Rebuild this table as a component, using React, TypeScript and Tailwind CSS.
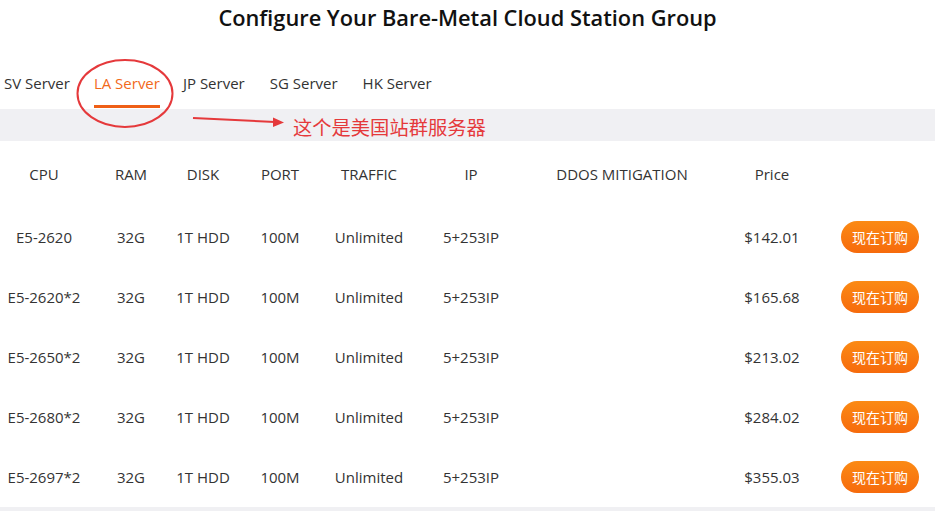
import React from "react";

const tabs = ["SV Server", "LA Server", "JP Server", "SG Server", "HK Server"];
const tabGap = ["mr-[24px]", "mr-[23px]", "mr-[25px]", "mr-[25px]", ""];

const rows = [
  { cpu: "E5-2620", price: "$142.01" },
  { cpu: "E5-2620*2", price: "$165.68" },
  { cpu: "E5-2650*2", price: "$213.02" },
  { cpu: "E5-2680*2", price: "$284.02" },
  { cpu: "E5-2697*2", price: "$355.03" },
];

const cols =
  "grid grid-cols-[88px_86px_58px_96px_82px_122px_180px_120px_96px] items-center text-center";

export default function App() {
  return (
    <div
      className="relative w-[935px] h-[511px] overflow-hidden bg-white text-[#333]"
      style={{ fontFamily: '"Open Sans", "Noto Sans CJK SC", sans-serif' }}
    >
      <h1 className="pt-[3px] text-center text-[21.8px] leading-[30px] font-semibold text-[#111]">
        Configure Your Bare-Metal Cloud Station Group
      </h1>

      {/* tabs */}
      <div className="mt-[38px] flex pl-[4px] text-[15px] leading-[24px]">
        {tabs.map((t, i) => (
          <div key={t} className={`flex flex-col items-center ${tabGap[i]}`}>
            <span className={i === 1 ? "text-[#f26a1b]" : "text-[#333]"}>{t}</span>
            <span
              className={`mt-[10px] h-[3px] w-full ${i === 1 ? "bg-[#ef5f16]" : "bg-transparent"}`}
            />
          </div>
        ))}
      </div>

      <div className="mt-px h-[32px] bg-[#f0f0f3]" />

      {/* table */}
      <div className="text-[15px]">
        <div className={`${cols} h-[66px]`}>
          <div>CPU</div>
          <div>RAM</div>
          <div>DISK</div>
          <div>PORT</div>
          <div>TRAFFIC</div>
          <div>IP</div>
          <div>DDOS MITIGATION</div>
          <div>Price</div>
          <div />
        </div>
        {rows.map((r) => (
          <div key={r.cpu} className={`${cols} h-[60px]`}>
            <div>{r.cpu}</div>
            <div>32G</div>
            <div>1T HDD</div>
            <div>100M</div>
            <div>Unlimited</div>
            <div>5+253IP</div>
            <div />
            <div>{r.price}</div>
            <div className="flex justify-center">
              <button className="h-[32px] w-[78px] rounded-full bg-gradient-to-b from-[#fb8a14] to-[#f66a0c] text-[14px] text-white">
                现在订购
              </button>
            </div>
          </div>
        ))}
      </div>
      <div className="h-[4px] bg-[#f0f0f3]" />

      {/* red annotations */}
      <svg
        className="pointer-events-none absolute left-0 top-0"
        width="935"
        height="511"
        viewBox="0 0 935 511"
      >
        <ellipse cx="125" cy="93.5" rx="47.5" ry="33.5" fill="none" stroke="#e5393b" strokeWidth="2" />
        <line x1="193" y1="118" x2="275" y2="122" stroke="#e5393b" strokeWidth="2" />
        <polygon points="273,117.5 284,122.5 273,127" fill="#e5393b" />
      </svg>
      <div className="absolute left-[293px] top-[114px] text-[19.3px] leading-[28px] text-[#e5393b]">
        这个是美国站群服务器
      </div>
    </div>
  );
}
